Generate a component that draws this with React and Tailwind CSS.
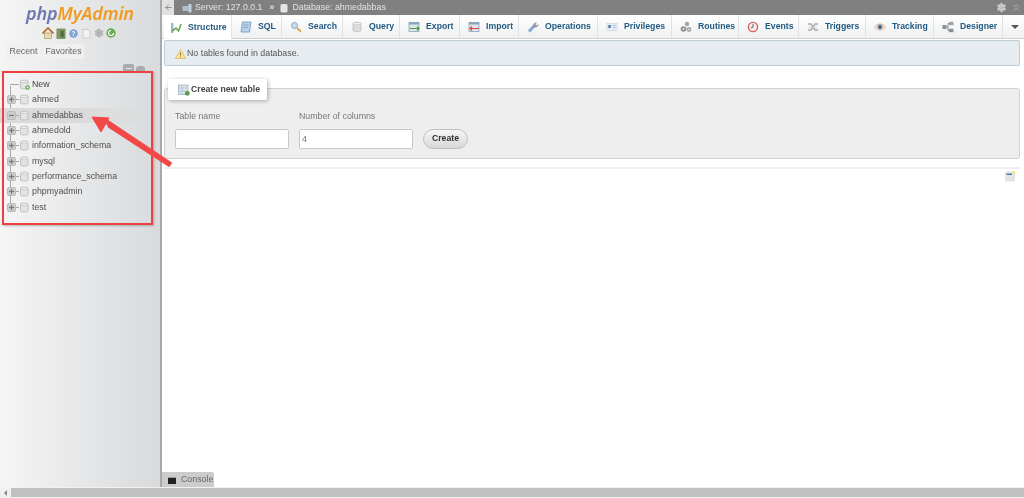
import React from 'react';
import { Settings, ChevronsUp, ArrowLeft } from 'lucide-react';

const databases = [
  { name: 'ahmed' },
  { name: 'ahmedabbas', open: true },
  { name: 'ahmedold' },
  { name: 'information_schema' },
  { name: 'mysql' },
  { name: 'performance_schema' },
  { name: 'phpmyadmin' },
  { name: 'test' },
];

const DbIcon = ({ plus }) => (
  <svg width="11" height="11" viewBox="0 0 11 11" className="shrink-0">
    <path d="M1.5 2.2C1.5 1 9 1 9 2.2V9C9 10.3 1.5 10.3 1.5 9Z" fill="#e2e3e4" stroke="#b4b6b8" strokeWidth="0.8" />
    <ellipse cx="5.25" cy="2.3" rx="3.6" ry="1.1" fill="#f5f5f5" stroke="#b4b6b8" strokeWidth="0.6" />
    {plus && <circle cx="8.6" cy="8.6" r="2.2" fill="#55a03c" />}
    {plus && <path d="M7.4 8.6H9.8M8.6 7.4V9.8" stroke="#fff" strokeWidth="0.8" />}
  </svg>
);

const Expander = ({ open }) => (
  <svg width="9" height="9" viewBox="0 0 9 9" className="shrink-0">
    <rect x="0.5" y="0.5" width="8" height="8" rx="1.5" fill="#cbcccd" stroke="#b8babc" />
    <path d="M2 4.5H7" stroke="#777" strokeWidth="1.2" />
    {!open && <path d="M4.5 2V7" stroke="#777" strokeWidth="1.2" />}
  </svg>
);

const tabIcons = {
  Structure: (
    <>
      <rect x="1" y="1" width="2.5" height="10" fill="#9dbbd8" />
      <path d="M2 9L6 6L8.5 9L11 2" fill="none" stroke="#6aa84f" strokeWidth="1.6" />
    </>
  ),
  SQL: (
    <>
      <path d="M2.5 1H11L9.5 11H1Z" fill="#b9d2ea" stroke="#6d94b8" strokeWidth="0.8" />
      <path d="M3.5 4H8.5M3 6.5H8" stroke="#6d94b8" strokeWidth="0.7" />
    </>
  ),
  Search: (
    <>
      <circle cx="4.5" cy="4.5" r="3" fill="#c8dcf0" stroke="#8aa5bf" />
      <path d="M7 7L11 10.5" stroke="#d9a441" strokeWidth="1.8" />
    </>
  ),
  Query: (
    <>
      <path d="M2 2.5C2 1 10 1 10 2.5V9.5C10 11 2 11 2 9.5Z" fill="#dcdcdc" stroke="#bbb" strokeWidth="0.8" />
      <ellipse cx="6" cy="2.6" rx="3.8" ry="1.2" fill="#f2f2f2" stroke="#bbb" strokeWidth="0.5" />
    </>
  ),
  Export: (
    <>
      <rect x="1" y="1.5" width="10" height="9" fill="#dce7ef" stroke="#8aa3b8" strokeWidth="0.8" />
      <rect x="1" y="1.5" width="10" height="2" fill="#8aa3b8" />
      <path d="M2 7.5H11M9 5.5L11 7.5L9 9.5" fill="none" stroke="#4f9e35" strokeWidth="1.2" />
    </>
  ),
  Import: (
    <>
      <rect x="1" y="1.5" width="10" height="9" fill="#dce7ef" stroke="#8aa3b8" strokeWidth="0.8" />
      <rect x="1" y="1.5" width="10" height="2" fill="#8aa3b8" />
      <path d="M11 7.5H2M4 5.5L2 7.5L4 9.5" fill="none" stroke="#d84a3a" strokeWidth="1.2" />
    </>
  ),
  Operations: (
    <>
      <path d="M2 10.5L7 5" stroke="#84a9d6" strokeWidth="3" />
      <path d="M6 4.5C6 2.5 8 1 10 1.5L8.5 3.5L9.5 4.5L11.5 3C11.5 5.5 9.5 7 7.5 6.5Z" fill="#9a9a9a" />
    </>
  ),
  Privileges: (
    <>
      <rect x="1" y="2.5" width="10" height="7" fill="#e6edf3" stroke="#c5ced6" strokeWidth="0.6" />
      <rect x="2.2" y="4" width="2.8" height="3" fill="#5f86b0" />
      <path d="M6.5 4.5H10M6.5 6.5H10" stroke="#aab6c2" strokeWidth="0.8" />
    </>
  ),
  Routines: (
    <>
      <circle cx="7" cy="3" r="2.2" fill="#a5a5a5" />
      <circle cx="3.5" cy="8" r="2.8" fill="#8f8f8f" />
      <circle cx="9" cy="8.5" r="2.4" fill="#a5a5a5" />
      <circle cx="3.5" cy="8" r="0.9" fill="#eee" />
      <circle cx="9" cy="8.5" r="0.8" fill="#eee" />
    </>
  ),
  Events: (
    <>
      <circle cx="6" cy="6" r="4.6" fill="#fbeeee" stroke="#d8625a" strokeWidth="1.4" />
      <path d="M6 3V6.2L3.8 7" fill="none" stroke="#555" strokeWidth="0.9" />
    </>
  ),
  Triggers: (
    <>
      <path d="M1 3H4L8 9H11M1 9H4L8 3H11" fill="none" stroke="#aaa" strokeWidth="1.4" />
      <path d="M1.5 6H10" stroke="#ccc" strokeWidth="1" />
    </>
  ),
  Tracking: (
    <>
      <path d="M0.5 6C3 1.8 9 1.8 11.5 6C9 10.2 3 10.2 0.5 6Z" fill="#f4dcc8" stroke="#e0b48f" strokeWidth="0.7" />
      <circle cx="6" cy="6" r="2.4" fill="#5f86b0" />
      <circle cx="6" cy="6" r="1" fill="#2e4a68" />
    </>
  ),
  Designer: (
    <>
      <rect x="0.5" y="4" width="4" height="4" fill="#8b8f93" />
      <rect x="7" y="0.8" width="4.5" height="3.4" fill="#a0a4a8" />
      <rect x="7" y="7.8" width="4.5" height="3.4" fill="#8b8f93" />
      <path d="M4.5 6H6V2.5H7M6 6V9.5H7" fill="none" stroke="#777" strokeWidth="0.8" />
    </>
  ),
};

const tabs = [
  { label: 'Structure', width: 'w-[68px]', active: true },
  { label: 'SQL', width: 'w-[50px]' },
  { label: 'Search', width: 'w-[61px]' },
  { label: 'Query', width: 'w-[57px]' },
  { label: 'Export', width: 'w-[60px]' },
  { label: 'Import', width: 'w-[59px]' },
  { label: 'Operations', width: 'w-[79px]' },
  { label: 'Privileges', width: 'w-[74px]' },
  { label: 'Routines', width: 'w-[67px]' },
  { label: 'Events', width: 'w-[60px]' },
  { label: 'Triggers', width: 'w-[67px]' },
  { label: 'Tracking', width: 'w-[68px]' },
  { label: 'Designer', width: 'w-[69px]' },
];

const App = () => {
  return (
    <div className="relative w-[1024px] h-[498px] overflow-hidden flex flex-col bg-white blur-[0.35px] font-['Liberation_Sans',Arial,sans-serif] text-[8.8px] text-[#444]">
      <div className="flex flex-1 min-h-0">
        {/* Left navigation */}
        <aside className="w-[160px] shrink-0 flex flex-col bg-gradient-to-r from-[#f5f5f5] to-[#d8dadc]">
          <div className="h-[26px] pt-[1px] pl-[26px] font-['Noto_Sans',sans-serif] italic font-semibold text-[18px] leading-[24px] tracking-[-0.2px]">
            <span className="text-[#6c78af]">php</span>
            <span className="text-[#f29a1f]">MyAdmin</span>
          </div>
          <div className="flex items-center gap-[3px] pl-[42px] h-[14px]">
            <svg width="12" height="12" viewBox="0 0 12 12">
              <path d="M0.5 6.5L6 1L11.5 6.5" fill="none" stroke="#b5651d" strokeWidth="1.6" />
              <rect x="2.5" y="6" width="7" height="5.5" fill="#e8d9a8" stroke="#8a7a50" strokeWidth="0.5" />
            </svg>
            <svg width="10" height="11" viewBox="0 0 11 12" className="-ml-[1px]">
              <rect x="1" y="1" width="9" height="10.5" fill="#7f9a62" stroke="#5f7a48" strokeWidth="0.6" />
              <rect x="5" y="3" width="3.5" height="7" fill="#4f6a3a" />
            </svg>
            <svg width="9" height="9" viewBox="0 0 10 10">
              <circle cx="5" cy="5" r="4.7" fill="#7ba3d4" />
              <text x="5" y="7.6" textAnchor="middle" fontSize="7" fontWeight="700" fill="#fff">?</text>
            </svg>
            <svg width="9" height="11" viewBox="0 0 10 11" className="ml-[1px]">
              <path d="M1 1H6.5L9 3.5V10.5H1Z" fill="#f3f3f3" stroke="#b5b5b5" strokeWidth="0.7" />
            </svg>
            <Settings size={10} className="text-[#a8a8a8] fill-[#bdbdbd]" />
            <svg width="10" height="10" viewBox="0 0 10 10" className="-ml-[1px]">
              <circle cx="5" cy="5" r="4.7" fill="#66ad54" />
              <path d="M7.5 5A2.5 2.5 0 1 1 5 2.5" fill="none" stroke="#fff" strokeWidth="1.2" />
            </svg>
          </div>
          <div className="flex gap-[3px] pl-[7px] mt-[4px]">
            <div className="w-[33px] h-[15px] bg-[#f0f0f0] rounded-[2px] flex items-center justify-center text-[8.8px] text-[#666]">Recent</div>
            <div className="w-[41px] h-[15px] bg-[#f0f0f0] rounded-[2px] flex items-center justify-center text-[8.8px] text-[#666]">Favorites</div>
          </div>
          <div className="flex justify-end gap-[2px] pr-[15px] mt-[5px] h-[9px]">
            <div className="w-[11px] h-[9px] rounded-[2px] bg-[#a9abad] flex items-center justify-center">
              <div className="w-[6px] h-[1.5px] bg-[#e8e8e8]" />
            </div>
            <div className="w-[9px] h-[7px] rounded-[3px] mt-[2px] bg-[#a9abad]" />
          </div>
          {/* Database tree */}
          <div className="relative mt-[4px] flex flex-col">
            <div className="absolute left-[10px] top-[9px] h-[124px] w-px bg-[#a8a8a8]" />
            <div className="flex items-center h-[15.33px] pl-[10px]">
              <div className="w-[9px] h-px bg-[#a8a8a8]" />
              <DbIcon plus />
              <span className="ml-[2px] text-[#444]">New</span>
            </div>
            {databases.map((db) => (
              <div key={db.name} className={`relative flex items-center h-[15.33px] pl-[7px] ${db.open ? 'bg-gradient-to-r from-[#dadada] via-[#dadada] to-transparent' : ''}`}>
                <Expander open={db.open} />
                <div className="w-[3px] h-px bg-[#a8a8a8]" />
                <DbIcon />
                <span className="ml-[2px] text-[#4f4f4f]">{db.name}</span>
              </div>
            ))}
          </div>
        </aside>
        <div className="w-[2px] shrink-0 bg-[#a9a9a9]" />

        {/* Main panel */}
        <main className="flex-1 min-w-0 flex flex-col">
          <div className="h-[15px] shrink-0 bg-[#808080] flex items-center text-[8.8px] text-[#e2e2e2]">
            <div className="w-[12px] h-[15px] bg-[#e0e0e0] flex items-center justify-center">
              <ArrowLeft size={9} className="text-[#777]" />
            </div>
            <svg width="10" height="10" viewBox="0 0 10 10" className="ml-[8px]">
              <rect x="0.5" y="3" width="6" height="5" fill="#a9c0d4" />
              <rect x="6.5" y="1" width="3" height="8.5" fill="#c9d1d8" />
            </svg>
            <span className="ml-[3px]">Server: 127.0.0.1</span>
            <span className="ml-[7px] font-bold">»</span>
            <svg width="8" height="10" viewBox="0 0 8 10" className="ml-[6px]">
              <path d="M0.5 2C0.5 0.6 7.5 0.6 7.5 2V8.5C7.5 9.8 0.5 9.8 0.5 8.5Z" fill="#e6e6e6" />
            </svg>
            <span className="ml-[4px]">Database: ahmedabbas</span>
            <Settings size={11} className="ml-auto text-[#b5b5b5] fill-[#cfcfcf]" />
            <ChevronsUp size={11} className="ml-[4px] mr-[2px] text-[#b5b5b5]" />
          </div>

          <div className="h-[24px] shrink-0 flex pl-[2px] border-b border-[#d0d0d0] bg-gradient-to-b from-[#ffffff] to-[#eef0f1]">
            {tabs.map((tab) => (
              <div
                key={tab.label}
                className={`${tab.width} shrink-0 flex items-center gap-[6px] pt-[1px] border-r border-[#e3e3e3] font-bold text-[8.7px] text-[#235a81] ${tab.active ? 'bg-white h-[24px] pl-[6px]' : 'pl-[8px]'}`}
              >
                <svg width="12" height="12" viewBox="0 0 12 12" className="shrink-0">{tabIcons[tab.label]}</svg>
                <span>{tab.label}</span>
              </div>
            ))}
            <div className="flex-1 flex items-center justify-center">
              <div className="w-0 h-0 border-x-[4px] border-x-transparent border-t-[4px] border-t-[#555] ml-[2px]" />
            </div>
          </div>

          <div className="mx-[2px] mr-[4px] mt-[1px] h-[26px] shrink-0 flex items-center pl-[10px] pt-[1px] gap-[1px] rounded-[2px] bg-[#e7ecf0] border border-[#bccdd8] text-[8.8px] text-[#555]">
            <svg width="11" height="10" viewBox="0 0 11 10">
              <path d="M5.5 0.5L10.8 9.5H0.2Z" fill="#f7e3a1" stroke="#d9b44a" strokeWidth="0.7" />
              <path d="M5.5 3.5V6.5M5.5 7.5V8.5" stroke="#8a6d1f" strokeWidth="0.9" />
            </svg>
            <span>No tables found in database.</span>
          </div>

          {/* Create table fieldset */}
          <div className="relative mx-[2px] mr-[4px] mt-[22px] h-[71px] shrink-0 rounded-[3px] bg-[#eeeeee] border border-[#d0d0d0]">
            <div className="absolute left-[3px] -top-[10px] w-[99px] h-[21px] flex items-center pl-[10px] gap-[1px] bg-white rounded-[2px] shadow-[1px_1px_4px_rgba(0,0,0,0.3)] font-bold text-[8.7px] text-[#444]">
              <svg width="12" height="12" viewBox="0 0 12 12">
                <rect x="0.5" y="1" width="9.5" height="9.5" fill="#dce7ef" stroke="#92a9bc" strokeWidth="0.7" />
                <path d="M0.5 4H10M0.5 7H10M4 1V10.5" stroke="#92a9bc" strokeWidth="0.5" />
                <circle cx="9.3" cy="9.3" r="2.4" fill="#55a03c" />
              </svg>
              <span>Create new table</span>
            </div>
            <div className="flex gap-[10px] pl-[10px] pt-[22px]">
              <div className="flex flex-col gap-[7px]">
                <span className="text-[8.8px] leading-[11px] text-[#777]">Table name</span>
                <input type="text" className="w-[114px] h-[20px] bg-white border border-[#c8c8c8] rounded-[2px] outline-none" />
              </div>
              <div className="flex flex-col gap-[7px]">
                <span className="text-[8.8px] leading-[11px] text-[#777]">Number of columns</span>
                <input type="text" defaultValue="4" className="w-[114px] h-[20px] px-[2px] bg-white border border-[#c8c8c8] rounded-[2px] outline-none text-[8.8px] text-[#777]" />
              </div>
              <button className="self-end w-[45px] h-[20px] rounded-full border border-[#c0c0c0] bg-gradient-to-b from-[#f6f6f6] to-[#d8d8d8] font-bold text-[8.7px] text-[#333]">Create</button>
            </div>
          </div>

          <div className="mx-[2px] mr-[4px] mt-[8px] h-[2px] shrink-0 bg-[#f0f0f0]" />
          <div className="flex justify-end pr-[9px] pt-[2px]">
            <svg width="10" height="11" viewBox="0 0 10 11">
              <rect x="0" y="0.5" width="10" height="10" rx="1" fill="#e4e4e4" />
              <rect x="1.5" y="2.5" width="5.5" height="1.5" fill="#4a78b5" />
              <path d="M7 0.5H10V3.5Z" fill="#f3e04a" />
            </svg>
          </div>

          <div className="mt-auto flex items-center w-[52px] h-[15px] bg-[#cccccc] rounded-tr-[2px] pl-[6px] pt-[1px] gap-[5px] text-[8.8px] text-[#666]">
            <div className="w-[8px] h-[7px] bg-[#222] border-t border-[#999]" />
            <span>Console</span>
          </div>
        </main>
      </div>

      {/* Bottom scrollbar */}
      <div className="h-[11px] shrink-0 flex items-center bg-[#f1f1f1]">
        <div className="w-[11px] flex justify-center">
          <div className="w-0 h-0 border-y-[3px] border-y-transparent border-r-[3px] border-r-[#888]" />
        </div>
        <div className="flex-1 h-[9px] bg-[#c1c1c1]" />
      </div>

      {/* Screenshot annotation */}
      <div className="absolute left-[2px] top-[71px] w-[151px] h-[154px] border-[2px] border-[#ee4040] shadow-[1px_1px_2px_rgba(0,0,0,0.25)] pointer-events-none" />
      <svg width="100" height="70" viewBox="0 0 100 70" className="absolute left-[85px] top-[108px] pointer-events-none">
        <path d="M20 11L24 19L84 58L86 55Z" fill="#f24848" stroke="#f24848" strokeWidth="2" strokeLinejoin="round" />
        <path d="M7 9L24 10L16 24Z" fill="#f24848" stroke="#f24848" strokeWidth="1" strokeLinejoin="round" />
      </svg>
    </div>
  );
};

export default App;
